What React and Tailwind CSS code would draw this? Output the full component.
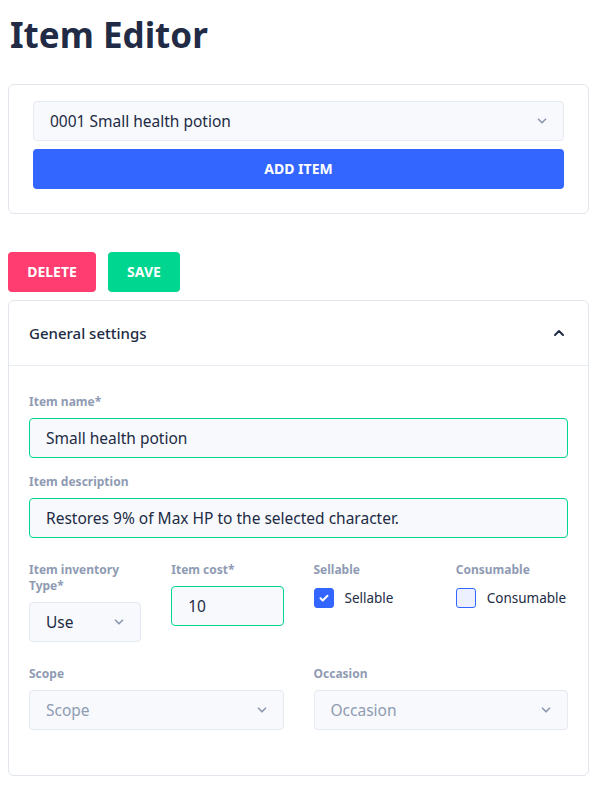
import React, { useState } from "react";

const font = { fontFamily: '"Noto Sans", "Open Sans", sans-serif' };

function Chevron({ className = "" }) {
  return (
    <svg viewBox="0 0 24 24" className={className} fill="none" stroke="currentColor" strokeWidth="3" strokeLinecap="round" strokeLinejoin="round">
      <path d="M6 9l6 6 6-6" />
    </svg>
  );
}

function Label({ children }) {
  return <label className="block text-xs leading-4 font-bold text-[#8f9bb3] mb-2">{children}</label>;
}

function SelectBox({ value, placeholder, className = "" }) {
  return (
    <div className={"h-10 flex items-center justify-between pl-4 pr-[14px] bg-[#f7f9fc] border border-[#e4e9f2] rounded " + className}>
      <span className={"text-[15.5px] leading-5 " + (value ? "text-[#222b45]" : "text-[#8f9bb3]")}>{value || placeholder}</span>
      <Chevron className="w-[14px] h-[14px] text-[#8f9bb3]" />
    </div>
  );
}

function TextBox({ value, className = "" }) {
  return (
    <div className={"h-10 flex items-center px-4 bg-[#f7f9fc] border border-[#00d68f] rounded text-[15.5px] leading-5 text-[#222b45] " + className}>
      {value}
    </div>
  );
}

function Check({ checked, onToggle, text }) {
  return (
    <div className="flex items-center gap-[11px] h-6 mt-[2px] cursor-pointer" onClick={onToggle}>
      <span className={"w-5 h-5 rounded-[3px] border flex items-center justify-center " + (checked ? "bg-[#3366ff] border-[#3366ff]" : "bg-[#edf1ff] border-[#3366ff]")}>
        {checked && (
          <svg viewBox="0 0 24 24" className="w-3 h-3" fill="none" stroke="white" strokeWidth="4" strokeLinecap="round" strokeLinejoin="round">
            <path d="M5 12.5l4.5 4.5L19 7.5" />
          </svg>
        )}
      </span>
      <span className="text-[13.5px] text-[#222b45]">{text}</span>
    </div>
  );
}

export default function App() {
  const [sellable, setSellable] = useState(true);
  const [consumable, setConsumable] = useState(false);

  return (
    <div style={font} className="min-h-screen bg-white pl-2 pr-[9px] pt-[15px] text-[#222b45]">
      <h1 className="text-[35px] leading-10 font-bold text-[#222b45] pl-[2px] mb-[29px]">Item Editor</h1>

      {/* item picker */}
      <div className="border border-[#e1e5ec] rounded-md px-6 pt-4 pb-6 flex flex-col gap-2">
        <SelectBox value="0001 Small health potion" />
        <button className="h-10 w-full rounded bg-[#3366ff] text-white text-sm font-bold">ADD ITEM</button>
      </div>

      <div className="flex gap-3 mt-[38px] mb-2">
        <button className="h-10 w-[88px] rounded bg-[#ff3d71] text-white text-sm font-bold">DELETE</button>
        <button className="h-10 w-[72px] rounded bg-[#00d68f] text-white text-sm font-bold">SAVE</button>
      </div>

      {/* settings card */}
      <div className="border border-[#e1e5ec] rounded-md">
        <div className="flex items-center justify-between px-5 py-[22px] border-b border-[#e8ebf1]">
          <span className="text-[15px] leading-5 font-medium text-[#222b45]">General settings</span>
          <Chevron className="w-4 h-4 rotate-180 text-[#222b45] mr-[1px]" />
        </div>

        <div className="px-5 pt-[28px] pb-[21px]">
          <div className="mb-4">
            <Label>Item name*</Label>
            <TextBox value="Small health potion" />
          </div>
          <div className="mb-6">
            <Label>Item description</Label>
            <TextBox value="Restores 9% of Max HP to the selected character." />
          </div>

          <div className="grid grid-cols-4 gap-x-[30px] mb-6">
            <div>
              <Label>Item inventory Type*</Label>
              <SelectBox value="Use" className="pr-[10px]" />
            </div>
            <div>
              <Label>Item cost*</Label>
              <TextBox value="10" />
            </div>
            <div>
              <Label>Sellable</Label>
              <Check checked={sellable} onToggle={() => setSellable(!sellable)} text="Sellable" />
            </div>
            <div>
              <Label>Consumable</Label>
              <Check checked={consumable} onToggle={() => setConsumable(!consumable)} text="Consumable" />
            </div>
          </div>

          <div className="grid grid-cols-2 gap-x-[30px] mb-6">
            <div>
              <Label>Scope</Label>
              <SelectBox placeholder="Scope" />
            </div>
            <div>
              <Label>Occasion</Label>
              <SelectBox placeholder="Occasion" />
            </div>
          </div>
        </div>
      </div>
    </div>
  );
}
